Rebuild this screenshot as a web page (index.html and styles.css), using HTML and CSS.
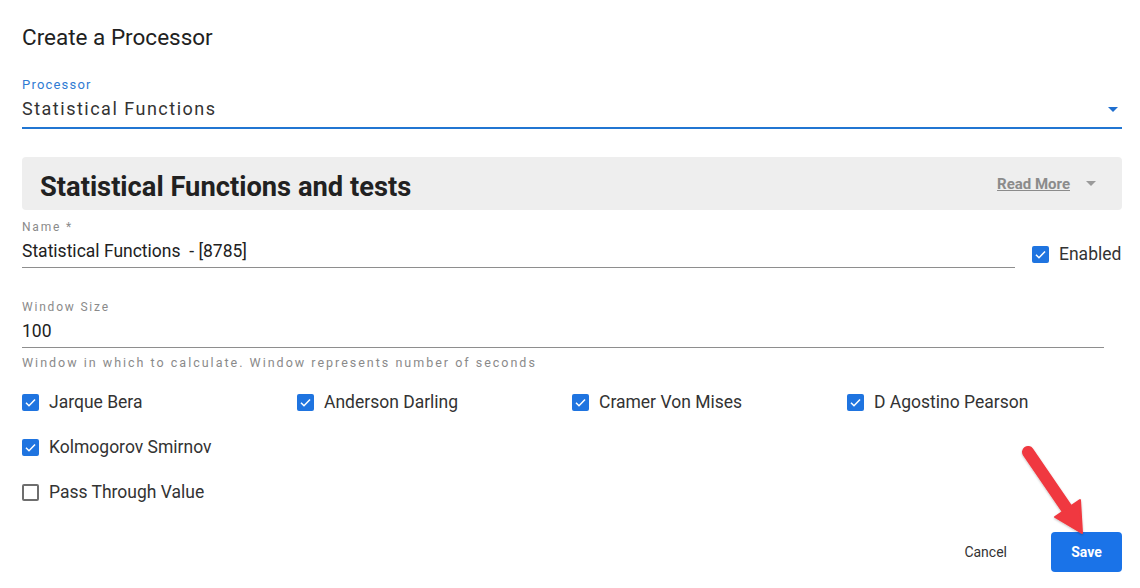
FILE: index.html
```html
<!DOCTYPE html>
<html lang="en">
<head>
<meta charset="utf-8">
<title>Create a Processor</title>
<link rel="stylesheet" href="styles.css">
</head>
<body>
<div class="dialog">
  <h1 class="dialog-title">Create a Processor</h1>

  <div class="field field-select">
    <label class="field-label label-active">Processor</label>
    <div class="field-input select-input">
      <span class="select-value">Statistical Functions</span>
      <span class="caret caret-blue"></span>
    </div>
  </div>

  <div class="panel">
    <h2 class="panel-title">Statistical Functions and tests</h2>
    <div class="panel-more">
      <a class="read-more">Read More</a>
      <span class="caret caret-gray"></span>
    </div>
  </div>

  <div class="name-row">
    <div class="field field-name">
      <label class="field-label">Name *</label>
      <div class="field-input text-input">Statistical Functions&nbsp; - [8785]</div>
    </div>
    <label class="check enabled-check">
      <span class="box on"><svg viewBox="0 0 18 18"><path d="M4.2 9.3l3.2 3.1 6.4-6.6"/></svg></span>
      <span class="check-text">Enabled</span>
    </label>
  </div>

  <div class="field field-window">
    <label class="field-label">Window Size</label>
    <div class="field-input text-input">100</div>
    <div class="helper">Window in which to calculate. Window represents number of seconds</div>
  </div>

  <div class="check-grid">
    <label class="check"><span class="box on"><svg viewBox="0 0 18 18"><path d="M4.2 9.3l3.2 3.1 6.4-6.6"/></svg></span><span class="check-text">Jarque Bera</span></label>
    <label class="check"><span class="box on"><svg viewBox="0 0 18 18"><path d="M4.2 9.3l3.2 3.1 6.4-6.6"/></svg></span><span class="check-text">Anderson Darling</span></label>
    <label class="check"><span class="box on"><svg viewBox="0 0 18 18"><path d="M4.2 9.3l3.2 3.1 6.4-6.6"/></svg></span><span class="check-text">Cramer Von Mises</span></label>
    <label class="check"><span class="box on"><svg viewBox="0 0 18 18"><path d="M4.2 9.3l3.2 3.1 6.4-6.6"/></svg></span><span class="check-text">D Agostino Pearson</span></label>
    <label class="check"><span class="box on"><svg viewBox="0 0 18 18"><path d="M4.2 9.3l3.2 3.1 6.4-6.6"/></svg></span><span class="check-text">Kolmogorov Smirnov</span></label>
    <label class="check row-start"><span class="box"></span><span class="check-text">Pass Through Value</span></label>
  </div>

  <div class="actions">
    <button class="btn btn-text">Cancel</button>
    <button class="btn btn-primary">Save</button>
    <svg class="pointer" width="90" height="100" viewBox="0 0 90 100">
      <defs>
        <filter id="arrow-shadow" x="-20%" y="-20%" width="140%" height="140%">
          <feDropShadow dx="0" dy="1" stdDeviation="1.2" flood-color="#000" flood-opacity="0.25"/>
        </filter>
      </defs>
      <g filter="url(#arrow-shadow)" fill="#f0393f" stroke="#f0393f">
        <line x1="13" y1="12" x2="52" y2="69" stroke-width="12" stroke-linecap="round"/>
        <path d="M40 77 L65 60 L67 93 Z" stroke-width="2" stroke-linejoin="round"/>
      </g>
    </svg>
  </div>
</div>
</body>
</html>
```

FILE: styles.css
```css
* {
  box-sizing: border-box;
}

html, body {
  margin: 0;
  background: #ffffff;
}

body {
  font-family: Roboto, "Liberation Sans", Arial, sans-serif;
  color: #212121;
}

.dialog {
  width: 1140px;
  height: 588px;
  padding: 25px 18px 0 22px;
  overflow: hidden;
}

.dialog-title {
  margin: 0;
  font-size: 22.5px;
  line-height: 24px;
  font-weight: 400;
  color: #212121;
}

/* text fields */
.field {
  display: flex;
  flex-direction: column;
}

.field-label {
  font-size: 12px;
  line-height: 14px;
  letter-spacing: 1.8px;
  color: #8a8a8a;
}

.field-input {
  font-size: 17.5px;
  line-height: 22px;
  color: #212121;
}

.field-select {
  margin-top: 28px;
}

.field-select .field-label {
  font-size: 13px;
  line-height: 16px;
  letter-spacing: 1.2px;
  color: #2f7bd3;
}

.select-input {
  display: flex;
  align-items: center;
  justify-content: space-between;
  margin-top: 5px;
  padding-bottom: 7px;
  border-bottom: 2px solid #2176d2;
}

.select-value {
  font-size: 18px;
  letter-spacing: 1.5px;
  color: #333333;
}

.caret {
  width: 0;
  height: 0;
  border-left: 5px solid transparent;
  border-right: 5px solid transparent;
  border-top: 5px solid #1f6fcf;
}

.caret-blue {
  margin-right: 4px;
}

.caret-gray {
  border-top-color: #9a9a9a;
}

/* description panel */
.panel {
  margin-top: 28px;
  height: 53px;
  background: #eeeeee;
  border-radius: 4px;
  display: flex;
  align-items: center;
  justify-content: space-between;
  padding: 0 26px 0 18px;
}

.panel-title {
  margin: 0;
  padding-top: 6px;
  font-size: 27.3px;
  font-weight: 700;
  color: #212121;
}

.panel-more {
  display: flex;
  align-items: center;
  gap: 16px;
}

.read-more {
  font-size: 15px;
  font-weight: 700;
  color: #8b8b8b;
  text-decoration: underline;
}

/* name + enabled row */
.name-row {
  display: flex;
  align-items: flex-end;
  margin-top: 10px;
}

.field-name {
  width: 993px;
}

.text-input {
  margin-top: 6px;
  padding-bottom: 5px;
  border-bottom: 1px solid #8e8e8e;
}

.enabled-check {
  margin-left: 17px;
  margin-bottom: 3px;
}

.field-window {
  margin-top: 32px;
  margin-right: 18px;
}

.helper {
  margin-top: 8px;
  font-size: 12.5px;
  line-height: 14px;
  letter-spacing: 2px;
  color: #8a8a8a;
}

/* checkboxes */
.check {
  display: flex;
  align-items: center;
  gap: 10px;
  height: 22px;
}

.box {
  width: 17px;
  height: 17px;
  border-radius: 2px;
  border: 2px solid #6e6e6e;
  background: #ffffff;
  display: flex;
  align-items: center;
  justify-content: center;
  flex: none;
}

.box.on {
  border: none;
  background: #1f74e0;
}

.box svg {
  width: 17px;
  height: 17px;
  fill: none;
  stroke: #ffffff;
  stroke-width: 1.6;
}

.check-text {
  font-size: 17.5px;
  color: #333333;
}

.check-grid {
  margin-top: 21px;
  display: grid;
  grid-template-columns: repeat(4, 275px);
  row-gap: 23px;
}

.row-start {
  grid-column: 1;
}

/* footer buttons */
.actions {
  position: relative;
  margin-top: 29px;
  display: flex;
  justify-content: flex-end;
  align-items: center;
}

.btn {
  font-family: Roboto, "Liberation Sans", Arial, sans-serif;
  font-size: 14px;
  border: none;
  cursor: pointer;
  height: 40px;
  border-radius: 4px;
}

.btn-text {
  background: transparent;
  color: #333333;
  padding: 0 14px;
  margin-right: 30px;
}

.btn-primary {
  width: 71px;
  background: #1a73e8;
  color: #ffffff;
  font-weight: 700;
}

/* callout arrow drawn over the footer */
.pointer {
  position: absolute;
  right: 17px;
  top: -92px;
}
```
